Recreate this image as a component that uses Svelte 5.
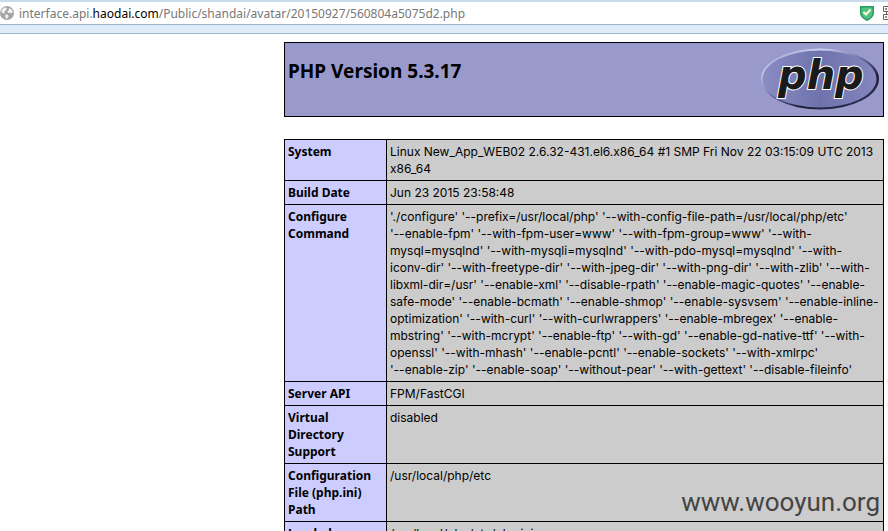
<script>
  const url = {
    sub: 'interface.api.',
    domain: 'haodai.com',
    path: '/Public/shandai/avatar/20150927/560804a5075d2.php'
  };

  const version = '5.3.17';

  const configure = [
    "'./configure' '--prefix=/usr/local/php' '--with-config-file-path=/usr/local/php/etc'",
    "'--enable-fpm' '--with-fpm-user=www' '--with-fpm-group=www' '--with-",
    "mysql=mysqlnd' '--with-mysqli=mysqlnd' '--with-pdo-mysql=mysqlnd' '--with-",
    "iconv-dir' '--with-freetype-dir' '--with-jpeg-dir' '--with-png-dir' '--with-zlib' '--with-",
    "libxml-dir=/usr' '--enable-xml' '--disable-rpath' '--enable-magic-quotes' '--enable-",
    "safe-mode' '--enable-bcmath' '--enable-shmop' '--enable-sysvsem' '--enable-inline-",
    "optimization' '--with-curl' '--with-curlwrappers' '--enable-mbregex' '--enable-",
    "mbstring' '--with-mcrypt' '--enable-ftp' '--with-gd' '--enable-gd-native-ttf' '--with-",
    "openssl' '--with-mhash' '--enable-pcntl' '--enable-sockets' '--with-xmlrpc'",
    "'--enable-zip' '--enable-soap' '--without-pear' '--with-gettext' '--disable-fileinfo'"
  ].join('\n');

  const rows = [
    { key: 'System', value: 'Linux New_App_WEB02 2.6.32-431.el6.x86_64 #1 SMP Fri Nov 22 03:15:09 UTC 2013\nx86_64' },
    { key: 'Build Date', value: 'Jun 23 2015 23:58:48' },
    { key: 'Configure\nCommand', value: configure },
    { key: 'Server API', value: 'FPM/FastCGI' },
    { key: 'Virtual\nDirectory\nSupport', value: 'disabled' },
    { key: 'Configuration\nFile (php.ini)\nPath', value: '/usr/local/php/etc' },
    { key: 'Loaded', value: '/usr/local/php/etc/php.ini' }
  ];
</script>

<div class="window">
  <div class="address-bar">
    <svg width="14" height="14" viewBox="0 0 14 14">
      <circle cx="7" cy="7" r="7" fill="#a3a3a3" />
      <path d="M2 3.2 5 1.2 7 2 6.2 4.2 4.4 5.4 4.8 7 3 7.6 1.2 5.6zM8.6 2.2 11.4 3 12.8 6 11.4 7.6 9.4 6.6 8 7.2 7.4 5.2 9 4zM5.4 8.2 8 8.8 8.6 10.6 6.8 13 5.4 11.4z" fill="#f2f2f2" />
    </svg>
    <div class="url" role="textbox" aria-label="Address" aria-readonly="true" tabindex="0">{url.sub}<b>{url.domain}</b>{url.path}</div>
    <svg width="14" height="16" viewBox="0 0 14 16">
      <path d="M0 1H14V9Q13 13 7 16 1 13 0 9z" fill="#2a9d60" />
      <path d="M1.5 2.500H12.500V9Q11.500 12 7 14 2.500 12 1.500 9z" fill="#4fc486" />
      <path d="M3.500 7 6 9.500 10.500 4.500" fill="none" stroke="#fffbd0" stroke-width="2" />
    </svg>
    <svg class="qr" width="14" height="14" viewBox="0 0 14 14" fill="none" stroke="#666">
      <path d="M.5.5h5v5h-5zM8.500.5h5v5h-5zM.5 8.500h5v5h-5zM8.500 8.500h2v2M13.500 8.500v5h-5M3.500 5.500v3" />
      <path d="M2.500 2.500h1v1h-1zM10.500 2.500h1v1h-1zM2.500 10.500h1v1h-1z" />
    </svg>
  </div>
  <div class="toolbar"></div>

  <main>
    <div class="info">
      <header>
        <h1>PHP Version {version}</h1>
        <svg width="120" height="67" viewBox="0 0 120 67" role="img" aria-label="PHP logo">
          <defs>
            <linearGradient id="rim" x1="0.1" y1="0" x2="0.9" y2="1">
              <stop offset="0" stop-color="#8d90c4" />
              <stop offset="0.2" stop-color="#cdd2f0" />
              <stop offset="0.45" stop-color="#7276aa" />
              <stop offset="0.7" stop-color="#1c1c34" />
              <stop offset="1" stop-color="#33365c" />
            </linearGradient>
            <linearGradient id="face">
              <stop offset="0" stop-color="#8a8dc4" />
              <stop offset="0.5" stop-color="#6f73ac" />
              <stop offset="1" stop-color="#8487be" />
            </linearGradient>
          </defs>
          <ellipse cx="60" cy="33" rx="59" ry="30.500" fill="url(#rim)" />
          <ellipse cx="59.500" cy="33" rx="57" ry="28.500" fill="url(#face)" />
          <text class="logo" x="18" y="43">php</text>
        </svg>
      </header>

      <table>
        <tbody>
          {#each rows as row}
            <tr>
              <th scope="row">{row.key}</th>
              <td>{row.value}</td>
            </tr>
          {/each}
        </tbody>
      </table>
    </div>
  </main>

  <div class="watermark">www.wooyun.org</div>
</div>

<style>
  :global(body) {
    overflow: hidden;
    background: #fff;
  }

  .window {
    position: relative;
    height: 100vh;
    overflow: hidden;
    font-family: "Noto Sans", "Open Sans", sans-serif;
    font-size: 12px;
    line-height: 17px;
    color: #000;
  }

  .address-bar {
    display: flex;
    align-items: center;
    gap: 5px;
    height: 22px;
    overflow: hidden;
    border-top: 2px solid #c9dbea;
    border-bottom: 1px solid #9db4cd;
  }

  .address-bar svg {
    flex-shrink: 0;
  }

  .url {
    flex: 1;
    color: #777;
    white-space: nowrap;
  }

  .url b {
    font-weight: 400;
    color: #000;
  }

  .address-bar .qr {
    margin: 0 -9px 0 4px;
  }

  .toolbar {
    height: 8px;
    background: #deebf9;
    border-bottom: 1px solid #a3b7cb;
  }

  main {
    display: flex;
    justify-content: flex-end;
    padding: 8px 4px 0;
  }

  .info {
    width: 100%;
    max-width: 600px;
  }

  header {
    display: flex;
    justify-content: space-between;
    align-items: flex-start;
    box-sizing: border-box;
    height: 75px;
    padding: 3px;
    border: 1px solid #000;
    background: #9999cc;
  }

  h1 {
    margin: 13px 0 0;
    font-size: 19px;
    line-height: 24px;
  }

  .logo {
    font-family: "DejaVu Sans", sans-serif;
    font-size: 40px;
    font-weight: 700;
    font-style: italic;
    fill: #1a1a1a;
    stroke: #fff;
    stroke-width: 2px;
    paint-order: stroke;
  }

  table {
    width: 100%;
    margin-top: 22px;
    border-collapse: collapse;
    table-layout: fixed;
  }

  th,
  td {
    padding: 3px;
    border: 1px solid #000;
    text-align: left;
    vertical-align: top;
    white-space: pre;
  }

  th {
    width: 95px;
    background: #ccccff;
    font-weight: 700;
  }

  td {
    background: #cccccc;
    font-family: Inter, "Noto Sans", sans-serif;
  }

  .watermark {
    position: absolute;
    right: 8px;
    bottom: 12px;
    font-family: Roboto, "Noto Sans", sans-serif;
    font-size: 26px;
    line-height: 34px;
    color: #444;
  }
</style>
